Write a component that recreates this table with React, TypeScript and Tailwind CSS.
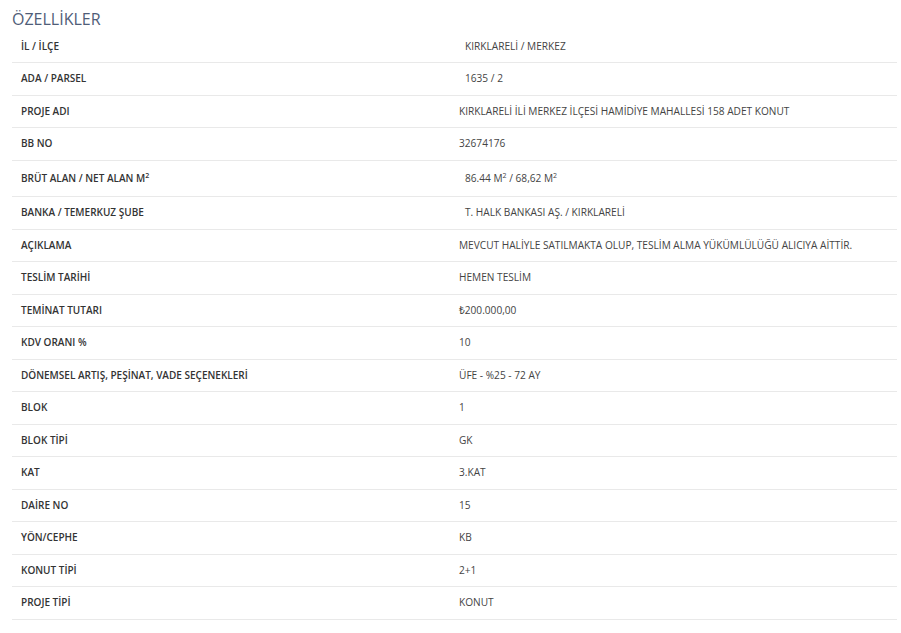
import React from "react";

type Row = { label: React.ReactNode; value: React.ReactNode; shift?: boolean; tall?: boolean };

const rows: Row[] = [
  { label: "İL / İLÇE", value: "KIRKLARELİ / MERKEZ", shift: true },
  { label: "ADA / PARSEL", value: "1635 / 2", shift: true },
  { label: "PROJE ADI", value: "KIRKLARELİ İLİ MERKEZ İLÇESİ HAMİDİYE MAHALLESİ 158 ADET KONUT" },
  { label: "BB NO", value: "32674176" },
  {
    label: (
      <>
        BRÜT ALAN / NET ALAN M<sup className="text-[7px]">2</sup>
      </>
    ),
    value: (
      <>
        86.44 M<sup className="text-[7px]">2</sup> / 68,62 M<sup className="text-[7px]">2</sup>
      </>
    ),
    shift: true,
    tall: true,
  },
  { label: "BANKA / TEMERKUZ ŞUBE", value: "T. HALK BANKASI AŞ. / KIRKLARELİ", shift: true },
  { label: "AÇIKLAMA", value: "MEVCUT HALİYLE SATILMAKTA OLUP, TESLİM ALMA YÜKÜMLÜLÜĞÜ ALICIYA AİTTİR." },
  { label: "TESLİM TARİHİ", value: "HEMEN TESLİM" },
  { label: "TEMİNAT TUTARI", value: "₺200.000,00" },
  { label: "KDV ORANI %", value: "10" },
  { label: "DÖNEMSEL ARTIŞ, PEŞİNAT, VADE SEÇENEKLERİ", value: "ÜFE - %25 - 72 AY" },
  { label: "BLOK", value: "1" },
  { label: "BLOK TİPİ", value: "GK" },
  { label: "KAT", value: "3.KAT" },
  { label: "DAİRE NO", value: "15" },
  { label: "YÖN/CEPHE", value: "KB" },
  { label: "KONUT TİPİ", value: "2+1" },
  { label: "PROJE TİPİ", value: "KONUT" },
];

export default function App() {
  return (
    <div
      className="w-[901px] h-[633px] bg-white overflow-hidden"
      style={{ fontFamily: '"Open Sans", "Noto Sans", sans-serif' }}
    >
      <div className="h-[30.5px] pl-[12px] pt-[9px] text-[16px] leading-[20px] text-[#4f5d78]">
        ÖZELLİKLER
      </div>
      <div className="ml-[12px] w-[885px]">
        {rows.map((r, i) => (
          <div
            key={i}
            className={`flex items-center border-b border-[#e9e9e9] ${r.tall ? "h-[36.5px]" : "h-[32.5px]"}`}
          >
            <div className="w-[440px] pl-[9px] text-[10px] font-semibold text-[#333333]">{r.label}</div>
            <div
              className={`flex-1 text-[10.15px] text-[#444444] ${r.shift ? "pl-[13px]" : "pl-[7px]"}`}
            >
              {r.value}
            </div>
          </div>
        ))}
      </div>
    </div>
  );
}
